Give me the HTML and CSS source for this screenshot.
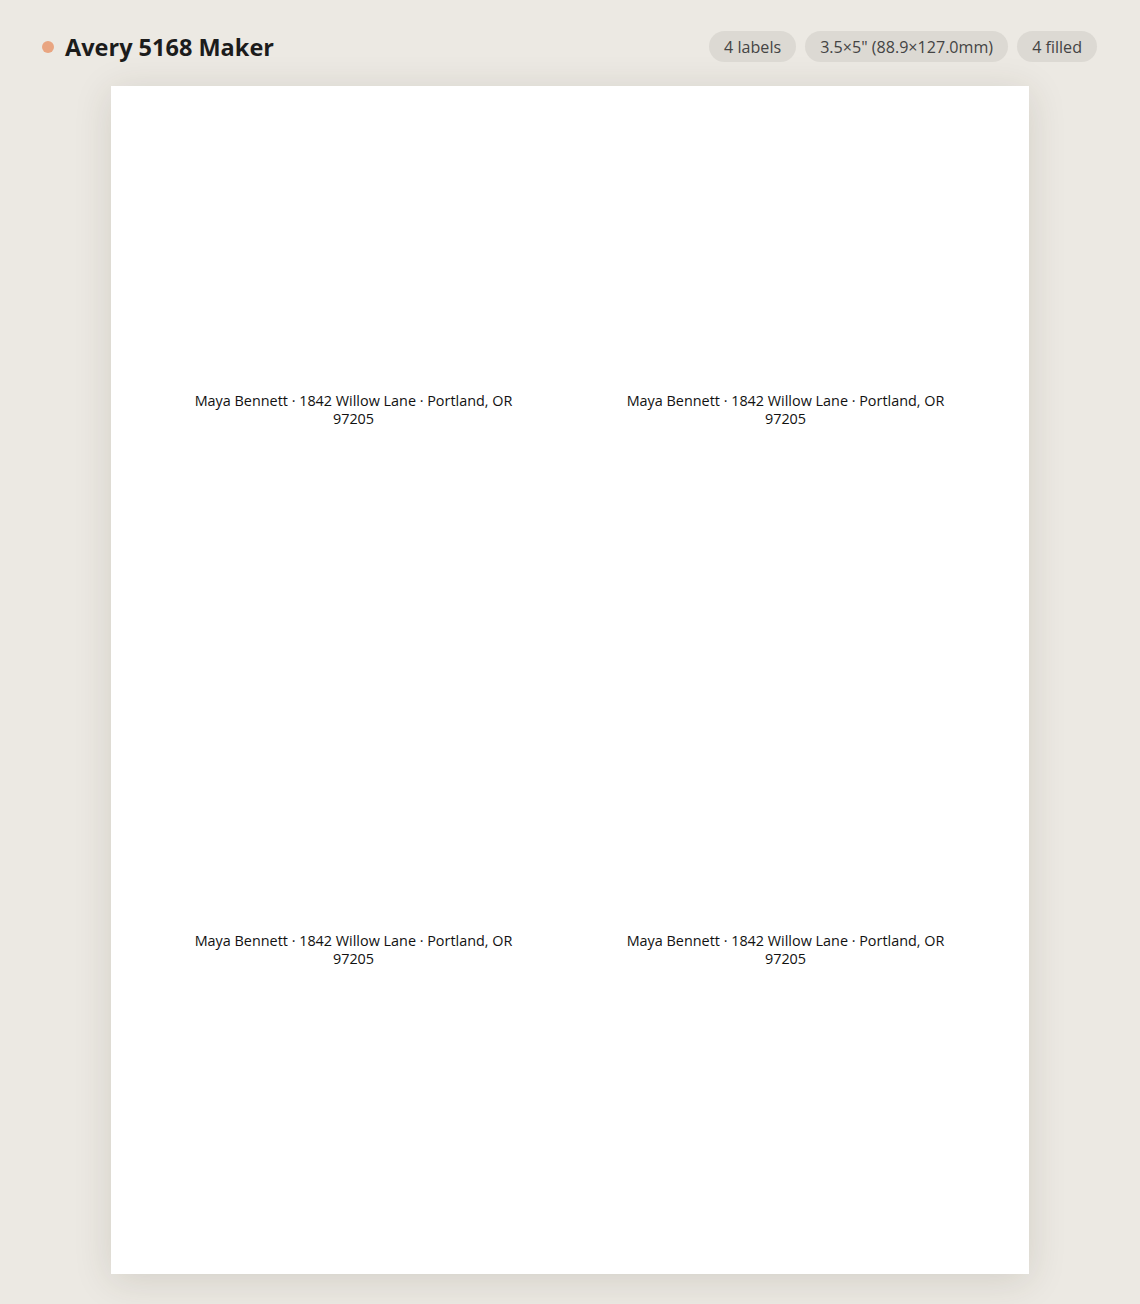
FILE: index.html
```html
<!DOCTYPE html>
<html lang="en">
<head>
<meta charset="utf-8">
<title>Avery 5168 Maker</title>
<link rel="stylesheet" href="styles.css">
</head>
<body>
<header class="topbar">
  <div class="brand">
    <span class="dot"></span>
    <h1 class="title">Avery 5168 Maker</h1>
  </div>
  <div class="chips">
    <span class="chip">4 labels</span>
    <span class="chip">3.5×5" (88.9×127.0mm)</span>
    <span class="chip">4 filled</span>
  </div>
</header>
<main class="sheet">
  <div class="label">Maya Bennett · 1842 Willow Lane · Portland, OR 97205</div>
  <div class="label">Maya Bennett · 1842 Willow Lane · Portland, OR 97205</div>
  <div class="label">Maya Bennett · 1842 Willow Lane · Portland, OR 97205</div>
  <div class="label">Maya Bennett · 1842 Willow Lane · Portland, OR 97205</div>
</main>
</body>
</html>
```
FILE: styles.css
```css
* { box-sizing: border-box; }
html, body { margin: 0; }
body {
  background: #ece9e3;
  font-family: "Open Sans", "Noto Sans", "DejaVu Sans", sans-serif;
  color: #1f1f1f;
  padding: 31px 43px 30px 42px;
}
.topbar {
  display: flex;
  align-items: center;
  justify-content: space-between;
  height: 31px;
  margin-bottom: 24px;
}
.brand {
  display: flex;
  align-items: center;
  gap: 11px;
}
.dot {
  width: 12px;
  height: 12px;
  border-radius: 50%;
  background: #e9a581;
}
.title {
  margin: 0;
  font-size: 23.5px;
  font-weight: 700;
  color: #1c1c1c;
  letter-spacing: 0;
}
.chips {
  display: flex;
  gap: 9px;
}
.chip {
  display: inline-flex;
  align-items: center;
  height: 31px;
  padding: 0 15px;
  border-radius: 16px;
  background: #dcd9d3;
  color: #444;
  font-size: 16.1px;
}
.sheet {
  width: 918px;
  height: 1188px;
  margin: 0 auto;
  background: #fff;
  box-shadow: 0 6px 36px rgba(60, 50, 30, 0.14);
  padding: 54px;
  display: grid;
  grid-template-columns: 378px 378px;
  grid-template-rows: 540px 540px;
  column-gap: 54px;
}
.label {
  display: flex;
  align-items: center;
  justify-content: center;
  text-align: center;
  padding: 14px;
  font-size: 14.4px;
  line-height: 18px;
  color: #111;
}
```
